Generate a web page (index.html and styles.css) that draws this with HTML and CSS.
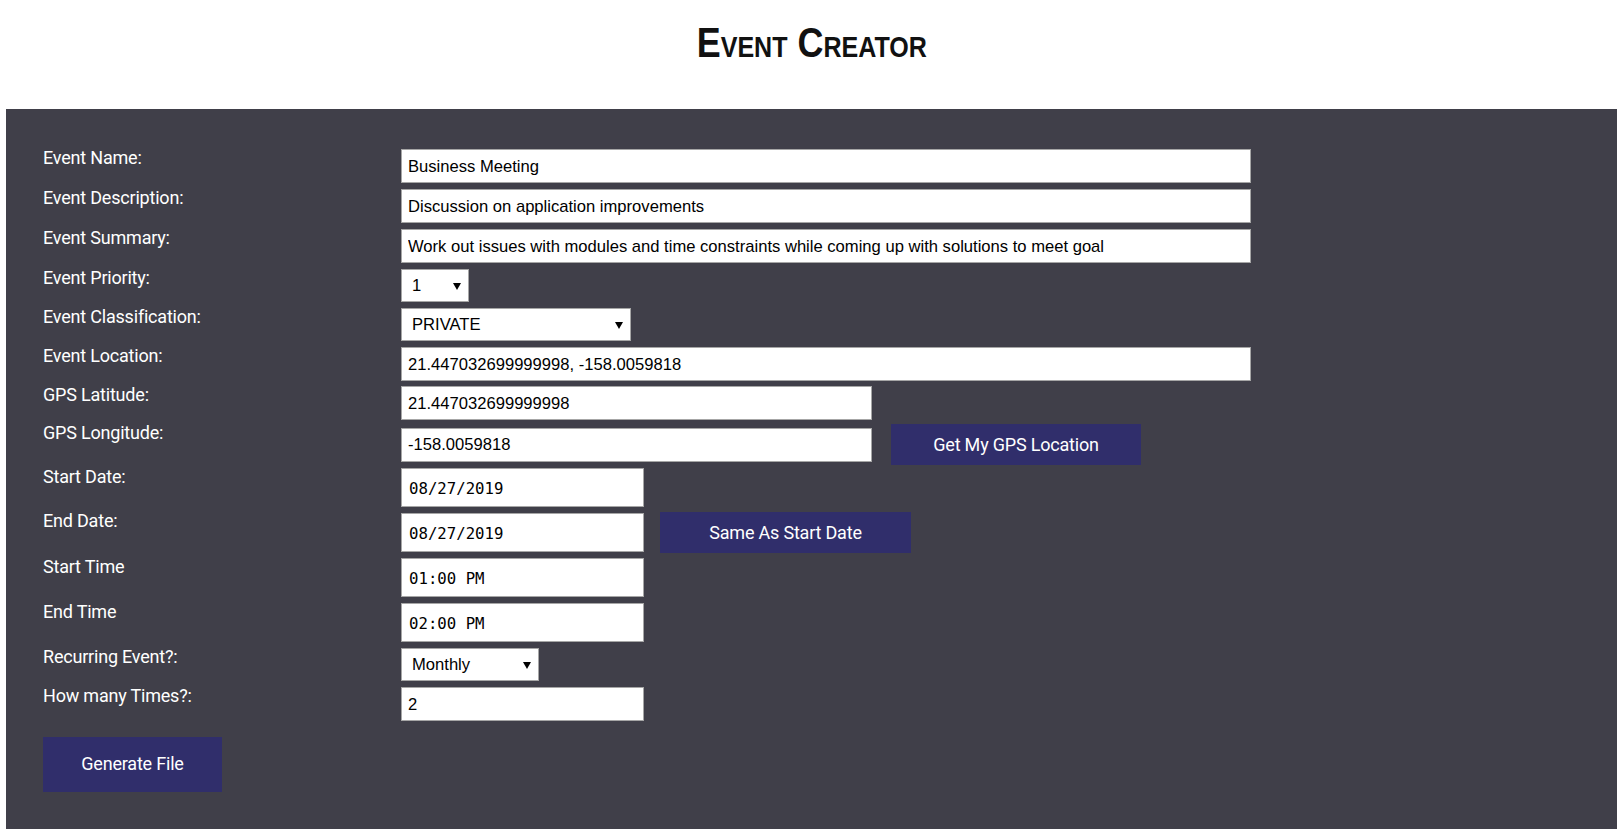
FILE: index.html
```html
<!DOCTYPE html>
<html lang="en">
<head>
<meta charset="utf-8">
<title>Event Creator</title>
<link rel="stylesheet" href="styles.css">
</head>
<body>
<header class="header">
  <h1 class="title">Event Creator</h1>
</header>
<div class="page">
  <main class="panel">
    <form class="form">
      <div class="row">
        <label class="label">Event Name:</label>
        <div class="field"><input class="input input--wide" type="text" value="Business Meeting"></div>
      </div>
      <div class="row">
        <label class="label">Event Description:</label>
        <div class="field"><input class="input input--wide" type="text" value="Discussion on application improvements"></div>
      </div>
      <div class="row">
        <label class="label">Event Summary:</label>
        <div class="field"><input class="input input--wide" type="text" value="Work out issues with modules and time constraints while coming up with solutions to meet goal"></div>
      </div>
      <div class="row">
        <label class="label">Event Priority:</label>
        <div class="field">
          <span class="select select--priority"><select class="select__control"><option>1</option><option>2</option><option>3</option></select></span>
        </div>
      </div>
      <div class="row">
        <label class="label">Event Classification:</label>
        <div class="field">
          <span class="select select--class"><select class="select__control"><option>PRIVATE</option><option>PUBLIC</option></select></span>
        </div>
      </div>
      <div class="row">
        <label class="label">Event Location:</label>
        <div class="field"><input class="input input--wide" type="text" value="21.447032699999998, -158.0059818"></div>
      </div>
      <div class="row row--gap5">
        <label class="label">GPS Latitude:</label>
        <div class="field"><input class="input input--half" type="text" value="21.447032699999998"></div>
      </div>
      <div class="row row--gap4">
        <label class="label">GPS Longitude:</label>
        <div class="field">
          <input class="input input--half" type="text" value="-158.0059818">
          <button class="btn btn--gps" type="button">Get My GPS Location</button>
        </div>
      </div>
      <div class="row row--gap3">
        <label class="label">Start Date:</label>
        <div class="field"><input class="input input--short input--mono" type="text" value="08/27/2019"></div>
      </div>
      <div class="row row--gap5">
        <label class="label">End Date:</label>
        <div class="field">
          <input class="input input--short input--mono" type="text" value="08/27/2019">
          <button class="btn btn--same" type="button">Same As Start Date</button>
        </div>
      </div>
      <div class="row row--gap5">
        <label class="label">Start Time</label>
        <div class="field"><input class="input input--short input--mono" type="text" value="01:00 PM"></div>
      </div>
      <div class="row">
        <label class="label">End Time</label>
        <div class="field"><input class="input input--short input--mono" type="text" value="02:00 PM"></div>
      </div>
      <div class="row">
        <label class="label">Recurring Event?:</label>
        <div class="field">
          <span class="select select--recur"><select class="select__control"><option>Monthly</option><option>Weekly</option><option>Daily</option></select></span>
        </div>
      </div>
      <div class="row">
        <label class="label">How many Times?:</label>
        <div class="field"><input class="input input--count" type="text" value="2"></div>
      </div>
      <div class="actions">
        <button class="btn btn--generate" type="button">Generate File</button>
      </div>
    </form>
  </main>
</div>
</body>
</html>
```
FILE: styles.css
```css
* {
  box-sizing: border-box;
}

body {
  margin: 0;
  background: #ffffff;
  font-family: Roboto, "Liberation Sans", sans-serif;
}

.header {
  height: 109px;
  padding-top: 21px;
  text-align: center;
}

.title {
  display: inline-block;
  margin: 0;
  font-family: "Liberation Sans", Arial, sans-serif;
  font-weight: bold;
  font-size: 43px;
  line-height: 43px;
  font-variant: small-caps;
  color: #111111;
  transform: scaleX(0.835);
}

.page {
  padding: 0 7px 9px 6px;
}

.panel {
  background: #403f49;
  padding: 40px 37px 37px 37px;
}

.form {
  display: flex;
  flex-direction: column;
  gap: 6px;
}

.row {
  display: flex;
  align-items: flex-start;
}

.row--gap5 {
  margin-top: -1px;
}

.row--gap4 {
  margin-top: -2px;
}

.row--gap3 {
  margin-top: -3px;
}

.label {
  flex: none;
  width: 358px;
  color: #ffffff;
  font-size: 18px;
  line-height: 18px;
  letter-spacing: -0.2px;
}

.field {
  display: flex;
  align-items: center;
}

.input {
  height: 34px;
  border: 1px solid #a6a6a6;
  border-radius: 0;
  background: #ffffff;
  padding: 1px 6px 0 6px;
  font-family: "Liberation Sans", Arial, sans-serif;
  font-size: 16.6px;
  color: #000000;
  outline: none;
}

.input--wide {
  width: 850px;
}

.input--half {
  width: 471px;
}

.input--short {
  width: 243px;
  height: 39px;
}

.input--count {
  width: 243px;
}

.input--mono {
  font-family: "DejaVu Sans Mono", "Liberation Mono", monospace;
  font-size: 15.7px;
  padding-left: 7px;
}

.select {
  position: relative;
  display: inline-block;
}

.select::after {
  content: "";
  position: absolute;
  right: 8px;
  top: 50%;
  margin-top: -3px;
  border-left: 4px solid transparent;
  border-right: 4px solid transparent;
  border-top: 7px solid #000000;
  pointer-events: none;
}

.select__control {
  appearance: none;
  -webkit-appearance: none;
  display: block;
  height: 33px;
  border: 1px solid #a6a6a6;
  border-radius: 0;
  background: #ffffff;
  padding: 0 0 0 10px;
  font-family: "Liberation Sans", Arial, sans-serif;
  font-size: 16.6px;
  color: #000000;
  outline: none;
}

.select--priority .select__control {
  width: 68px;
}

.select--class .select__control {
  width: 230px;
}

.select--recur .select__control {
  width: 138px;
}

.btn {
  border: none;
  border-radius: 0;
  background: #302e6b;
  color: #ffffff;
  font-family: Roboto, "Liberation Sans", sans-serif;
  font-size: 18px;
  letter-spacing: -0.2px;
  cursor: pointer;
}

.btn--gps {
  width: 250px;
  height: 41px;
  margin-left: 19px;
}

.btn--same {
  width: 251px;
  height: 41px;
  margin-left: 16px;
}

.actions {
  margin-top: 10px;
}

.btn--generate {
  width: 179px;
  height: 55px;
  padding-bottom: 3px;
}
```
